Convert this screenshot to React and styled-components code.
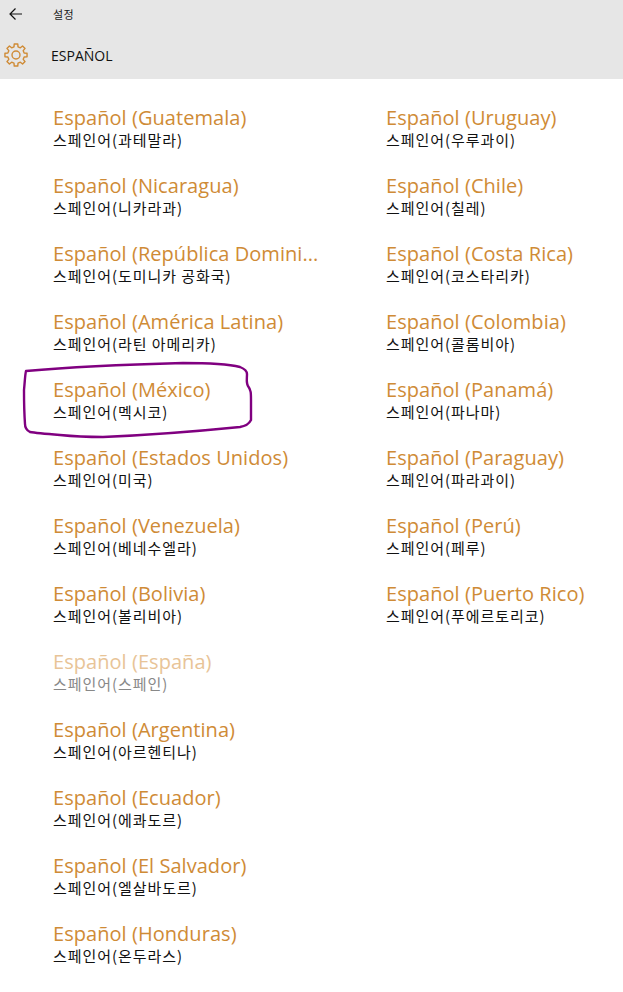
import React from "react";
import styled, { createGlobalStyle } from "styled-components";

const Global = createGlobalStyle`
  html, body { margin: 0; padding: 0; background: #fff; }
  body { font-family: "Open Sans", "Noto Sans CJK KR", sans-serif; }
`;
const Page = styled.div`
  position: relative;
  width: 623px;
  height: 992px;
  overflow: hidden;
  background: #fff;
`;
const Header = styled.header`
  height: 79px;
  background: #e6e6e6;
  display: flex;
  flex-direction: column;
`;
const TopBar = styled.div`
  height: 28px;
  display: flex;
  align-items: center;
  padding-left: 9px;
`;
const BackIcon = styled.svg`
  width: 13px;
  height: 12px;
  flex: none;
`;
const AppName = styled.span`
  margin-left: 31px;
  font: 11px "Noto Sans CJK KR", sans-serif;
  letter-spacing: 0.5px;
  color: #1a1a1a;
`;
const TitleBar = styled.div`
  height: 51px;
  display: flex;
  align-items: center;
  padding-left: 4px;
  padding-top: 3px;
  box-sizing: border-box;
`;
const Gear = styled.svg`
  width: 24px;
  height: 24px;
  flex: none;
`;
const Title = styled.h1`
  margin: 0 0 0 23px;
  font: 400 14px "Open Sans", sans-serif;
  color: #111;
`;
const Columns = styled.main`
  display: grid;
  grid-template-columns: 333px 1fr;
  padding: 27px 0 0 53px;
`;
const Column = styled.div`
  display: flex;
  flex-direction: column;
`;
const Item = styled.div`
  height: 68px;
`;
const Name = styled.div`
  font: 400 20px/24px "Open Sans", sans-serif;
  letter-spacing: 0.05px;
  color: ${(p) => (p.$disabled ? "#e8c497" : "#cf8b36")};
  white-space: nowrap;
`;
const Sub = styled.div`
  font: 400 15px/19px "Noto Sans CJK KR", sans-serif;
  letter-spacing: 0.95px;
  color: ${(p) => (p.$disabled ? "#888" : "#111")};
  white-space: nowrap;
`;
const Ink = styled.svg`
  position: absolute;
  left: 0;
  top: 0;
  pointer-events: none;
`;

const left = [
  ["Español (Guatemala)", "스페인어(과테말라)"],
  ["Español (Nicaragua)", "스페인어(니카라과)"],
  ["Español (República Domini...", "스페인어(도미니카 공화국)"],
  ["Español (América Latina)", "스페인어(라틴 아메리카)"],
  ["Español (México)", "스페인어(멕시코)"],
  ["Español (Estados Unidos)", "스페인어(미국)"],
  ["Español (Venezuela)", "스페인어(베네수엘라)"],
  ["Español (Bolivia)", "스페인어(볼리비아)"],
  ["Español (España)", "스페인어(스페인)", true],
  ["Español (Argentina)", "스페인어(아르헨티나)"],
  ["Español (Ecuador)", "스페인어(에콰도르)"],
  ["Español (El Salvador)", "스페인어(엘살바도르)"],
  ["Español (Honduras)", "스페인어(온두라스)"],
];
const right = [
  ["Español (Uruguay)", "스페인어(우루과이)"],
  ["Español (Chile)", "스페인어(칠레)"],
  ["Español (Costa Rica)", "스페인어(코스타리카)"],
  ["Español (Colombia)", "스페인어(콜롬비아)"],
  ["Español (Panamá)", "스페인어(파나마)"],
  ["Español (Paraguay)", "스페인어(파라과이)"],
  ["Español (Perú)", "스페인어(페루)"],
  ["Español (Puerto Rico)", "스페인어(푸에르토리코)"],
];

const point = (r, deg) => {
  const a = ((deg - 90) * Math.PI) / 180;
  return `${(12 + r * Math.cos(a)).toFixed(2)} ${(12 + r * Math.sin(a)).toFixed(2)}`;
};
const gearPath =
  [0, 45, 90, 135, 180, 225, 270, 315]
    .map((t, i) => {
      const seg = [
        point(8.4, t - 14),
        point(11.2, t - 9),
        point(11.2, t + 9),
        point(8.4, t + 14),
      ];
      return `${i === 0 ? "M" : "L"}${seg.join("L")}`;
    })
    .join("") + "Z";

function List({ items }) {
  return (
    <Column>
      {items.map(([n, s, d]) => (
        <Item key={n}>
          <Name $disabled={d}>{n}</Name>
          <Sub $disabled={d}>{s}</Sub>
        </Item>
      ))}
    </Column>
  );
}

export default function App() {
  return (
    <Page>
      <Global />
      <Header>
        <TopBar>
          <BackIcon viewBox="0 0 13 12" fill="none" stroke="#111" strokeWidth="1.2">
            <path d="M13 6H1M6.5 .5L1 6l5.500 5.500" />
          </BackIcon>
          <AppName>설정</AppName>
        </TopBar>
        <TitleBar>
          <Gear viewBox="0 0 24 24" fill="none" stroke="#cf8b36" strokeWidth="1.4">
            <circle cx="12" cy="12" r="4" />
            <path d={gearPath} strokeLinejoin="round" />
          </Gear>
          <Title>ESPAÑOL</Title>
        </TitleBar>
      </Header>
      <Columns>
        <List items={left} />
        <List items={right} />
      </Columns>
      <Ink width="623" height="992" viewBox="0 0 623 992" fill="none">
        <path
          d="M26 371C60 368 110 365 183 363C205 363 228 364 240 367C245 369 247 371 247 374C247 379 246 383 248 386C251 390 251 393 251 400L251 420C249 424 246 426 240 427C200 431 150 435 103 437C85 437 70 436 60 435C48 434 36 433 30 432C26 430 25 428 25 424C24 410 24 395 24 390C25 380 25 375 26 371"
          stroke="#800080"
          strokeWidth="2.400"
          strokeLinecap="round"
        />
      </Ink>
    </Page>
  );
}
